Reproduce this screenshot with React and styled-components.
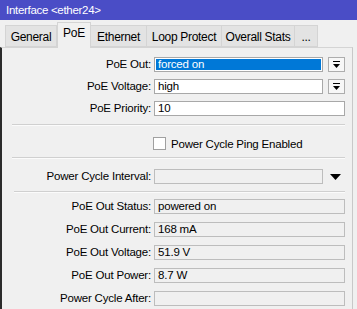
import React from "react";
import styled, { createGlobalStyle } from "styled-components";

const Global = createGlobalStyle`
  html, body { margin: 0; padding: 0; background: #f0f0f0; }
  body { font-family: "Liberation Sans", Arial, sans-serif; font-size: 11px; color: #000; }
`;

const Window = styled.div`
  width: 357px;
  height: 309px;
  background: #f0f0f0;
  overflow: hidden;
  display: flex;
  flex-direction: column;
`;

const TitleBar = styled.div`
  height: 20px;
  background: #4a4dc6;
  color: #fff;
  font-size: 11.5px;
  letter-spacing: -0.3px;
  line-height: 20px;
  padding-left: 6px;
  flex: none;
`;

const TabStrip = styled.div`
  height: 27px;
  display: flex;
  align-items: flex-end;
  padding-left: 5px;
  flex: none;
  position: relative;
  z-index: 1;
`;

const Tab = styled.div`
  width: ${(p) => p.$w}px;
  height: ${(p) => (p.$active ? "26px" : "22px")};
  margin-bottom: ${(p) => (p.$active ? "-1px" : "0")};
  background: ${(p) => (p.$active ? "#f0f0f0" : "#e3e3e3")};
  border: 1px solid #d4d4d4;
  border-bottom: ${(p) => (p.$active ? "none" : "1px solid #d4d4d4")};
  border-left-width: ${(p) => (p.$first || p.$active ? "1px" : "0")};
  display: flex;
  align-items: center;
  justify-content: center;
  padding-top: ${(p) => (p.$active ? "0" : "1px")};
  padding-bottom: ${(p) => (p.$active ? "5px" : "0")};
  box-sizing: border-box;
  font-size: 12px;
  letter-spacing: -0.3px;
  white-space: nowrap;
`;

const Panel = styled.div`
  flex: 1;
  margin-right: 4px;
  border-top: 1px solid #d4d4d4;
  border-right: 1px solid #c8c8c8;
  border-left: 2px solid #2b2b2b;
  padding: 9px 7px 0 0;
  display: flex;
  flex-direction: column;
`;

const Row = styled.div`
  display: grid;
  grid-template-columns: 149px 1fr ${(p) => (p.$withButton ? "19px" : "0px")};
  column-gap: 3px;
  align-items: center;
  height: 15px;
  margin-top: ${(p) => p.$top || 0}px;
`;

const Label = styled.div`
  text-align: right;
  white-space: nowrap;
  font-size: 11.5px;
  letter-spacing: -0.2px;
  line-height: 15px;
`;

const Field = styled.div`
  height: 15px;
  box-sizing: border-box;
  border: 1px solid ${(p) => (p.$readonly ? "#bdbdbd" : "#a8a8a8")};
  background: ${(p) => (p.$selected ? "#0078d7" : p.$readonly ? "#f0f0f0" : "#fff")};
  color: ${(p) => (p.$selected ? "#fff" : "#000")};
  font-size: 11.5px;
  letter-spacing: -0.2px;
  line-height: 13px;
  padding-left: 3px;
  white-space: nowrap;
  overflow: hidden;
  ${(p) => p.$selected && "box-shadow: inset 0 0 0 1px #fff;"}
  grid-column: ${(p) => (p.$wide ? "2 / 4" : "2")};
`;

const DropButton = styled.div`
  width: 17px;
  height: 15px;
  box-sizing: border-box;
  border: 1px solid #adadad;
  background: #f7f7f7;
  display: flex;
  align-items: center;
  justify-content: center;
  justify-self: end;
`;

const ArrowCell = styled.div`
  display: flex;
  align-items: center;
  justify-content: center;
  width: 19px;
  height: 15px;
`;

const Separator = styled.div`
  height: 1px;
  background: #d0d0d0;
  border-bottom: 1px solid #fbfbfb;
  margin: ${(p) => p.$top}px 0 0 ${(p) => p.$left || 10}px;
`;

const CheckRow = styled.div`
  display: flex;
  align-items: center;
  gap: 5px;
  padding-left: 151px;
  margin-top: 11px;
  height: 13px;
`;

const Box = styled.div`
  width: 13px;
  height: 13px;
  box-sizing: border-box;
  border: 1px solid #a0a0a0;
  background: #fff;
`;

const CheckText = styled.span`
  font-size: 11.5px;
  letter-spacing: -0.2px;
`;

const DropIcon = () => (
  <svg width="9" height="9" viewBox="0 0 9 9">
    <rect x="1" y="1" width="7" height="1" fill="#000" />
    <path d="M1 4 H8 L4.5 8 Z" fill="#000" />
  </svg>
);

const Triangle = () => (
  <svg width="11" height="6" viewBox="0 0 11 6">
    <path d="M0 0 H11 L5.5 6 Z" fill="#000" />
  </svg>
);

const tabs = [
  ["General", 52],
  ["PoE", 34],
  ["Ethernet", 56],
  ["Loop Protect", 75],
  ["Overall Stats", 73],
  ["...", 23],
];

const status = [
  ["PoE Out Status:", "powered on"],
  ["PoE Out Current:", "168 mA"],
  ["PoE Out Voltage:", "51.9 V"],
  ["PoE Out Power:", "8.7 W"],
  ["Power Cycle After:", ""],
];

export default function App() {
  return (
    <>
      <Global />
      <Window>
        <TitleBar>Interface &lt;ether24&gt;</TitleBar>
        <TabStrip>
          {tabs.map(([t, w], i) => (
            <Tab key={t} $w={w} $active={t === "PoE"} $first={i === 0}>
              {t}
            </Tab>
          ))}
        </TabStrip>
        <Panel>
          <Row $withButton>
            <Label>PoE Out:</Label>
            <Field $selected>forced on</Field>
            <DropButton>
              <DropIcon />
            </DropButton>
          </Row>
          <Row $withButton $top={7}>
            <Label>PoE Voltage:</Label>
            <Field>high</Field>
            <DropButton>
              <DropIcon />
            </DropButton>
          </Row>
          <Row $withButton $top={7}>
            <Label>PoE Priority:</Label>
            <Field $wide>10</Field>
          </Row>
          <Separator $top={8} />
          <CheckRow>
            <Box />
            <CheckText>Power Cycle Ping Enabled</CheckText>
          </CheckRow>
          <Separator $top={7} />
          <Row $withButton $top={10}>
            <Label>Power Cycle Interval:</Label>
            <Field $readonly></Field>
            <ArrowCell>
              <Triangle />
            </ArrowCell>
          </Row>
          <Separator $top={7} $left={12} />
          {status.map(([l, v], i) => (
            <Row key={l} $withButton $top={i === 0 ? 6 : 8}>
              <Label>{l}</Label>
              <Field $readonly $wide>
                {v}
              </Field>
            </Row>
          ))}
        </Panel>
      </Window>
    </>
  );
}
